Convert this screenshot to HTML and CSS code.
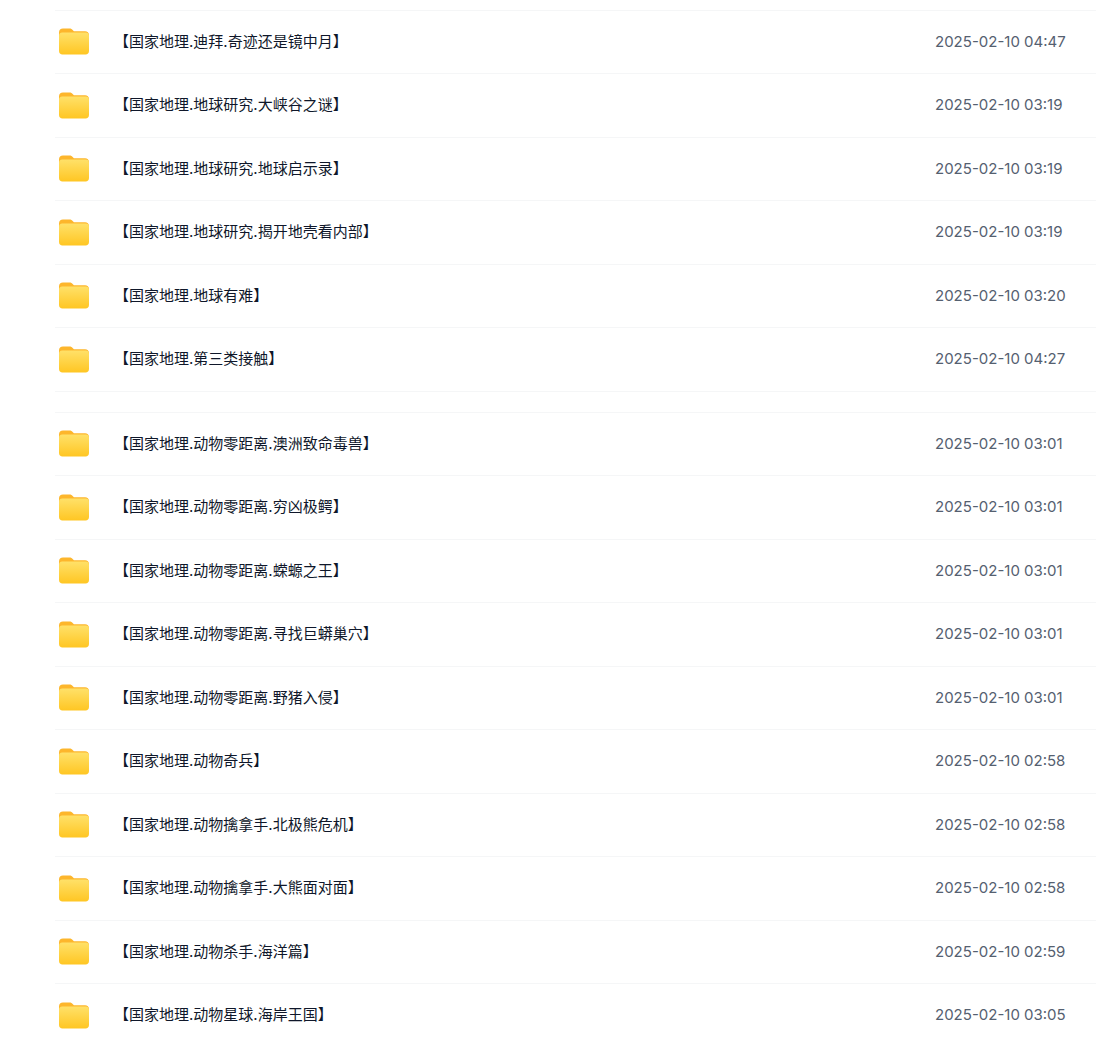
FILE: index.html
```html
<!DOCTYPE html>
<html lang="zh-CN">
<head>
  <meta charset="UTF-8">
  <title>文件列表</title>
  <link rel="stylesheet" href="styles.css">
</head>
<body>

<svg class="defs" width="0" height="0">
  <defs>
    <linearGradient id="folderFront" x1="0" y1="0" x2="0" y2="1">
      <stop offset="0" stop-color="#ffe169"/>
      <stop offset="1" stop-color="#ffc623"/>
    </linearGradient>
    <symbol id="folder" viewBox="0 0 32 28">
      <path d="M1 5.5C1 3 2.5 1.5 5 1.5h6.5c1.6 0 2.4.6 3.4 1.7l1 1.1H27c2.4 0 4 1.400 4 3.700V12H1z" fill="#fdb62c"/>
      <path d="M1 8.500C1 6.600 2.400 5.400 4.200 5.400H27.800C29.600 5.400 31 6.600 31 8.500V24c0 2-1.400 3.500-3.400 3.500H4.400C2.400 27.500 1 26 1 24z" fill="url(#folderFront)"/>
    </symbol>
  </defs>
</svg>

<div class="list">
  <div class="row">
    <svg class="icon"><use href="#folder"/></svg>
    <span class="name">【国家地理.迪拜.奇迹还是镜中月】</span>
    <span class="date">2025-02-10 04:47</span>
  </div>
  <div class="row">
    <svg class="icon"><use href="#folder"/></svg>
    <span class="name">【国家地理.地球研究.大峡谷之谜】</span>
    <span class="date">2025-02-10 03:19</span>
  </div>
  <div class="row">
    <svg class="icon"><use href="#folder"/></svg>
    <span class="name">【国家地理.地球研究.地球启示录】</span>
    <span class="date">2025-02-10 03:19</span>
  </div>
  <div class="row">
    <svg class="icon"><use href="#folder"/></svg>
    <span class="name">【国家地理.地球研究.揭开地壳看内部】</span>
    <span class="date">2025-02-10 03:19</span>
  </div>
  <div class="row">
    <svg class="icon"><use href="#folder"/></svg>
    <span class="name">【国家地理.地球有难】</span>
    <span class="date">2025-02-10 03:20</span>
  </div>
  <div class="row">
    <svg class="icon"><use href="#folder"/></svg>
    <span class="name">【国家地理.第三类接触】</span>
    <span class="date">2025-02-10 04:27</span>
  </div>
  <div class="row spacer"></div>
  <div class="row">
    <svg class="icon"><use href="#folder"/></svg>
    <span class="name">【国家地理.动物零距离.澳洲致命毒兽】</span>
    <span class="date">2025-02-10 03:01</span>
  </div>
  <div class="row">
    <svg class="icon"><use href="#folder"/></svg>
    <span class="name">【国家地理.动物零距离.穷凶极鳄】</span>
    <span class="date">2025-02-10 03:01</span>
  </div>
  <div class="row">
    <svg class="icon"><use href="#folder"/></svg>
    <span class="name">【国家地理.动物零距离.蝾螈之王】</span>
    <span class="date">2025-02-10 03:01</span>
  </div>
  <div class="row">
    <svg class="icon"><use href="#folder"/></svg>
    <span class="name">【国家地理.动物零距离.寻找巨蟒巢穴】</span>
    <span class="date">2025-02-10 03:01</span>
  </div>
  <div class="row">
    <svg class="icon"><use href="#folder"/></svg>
    <span class="name">【国家地理.动物零距离.野猪入侵】</span>
    <span class="date">2025-02-10 03:01</span>
  </div>
  <div class="row">
    <svg class="icon"><use href="#folder"/></svg>
    <span class="name">【国家地理.动物奇兵】</span>
    <span class="date">2025-02-10 02:58</span>
  </div>
  <div class="row">
    <svg class="icon"><use href="#folder"/></svg>
    <span class="name">【国家地理.动物擒拿手.北极熊危机】</span>
    <span class="date">2025-02-10 02:58</span>
  </div>
  <div class="row">
    <svg class="icon"><use href="#folder"/></svg>
    <span class="name">【国家地理.动物擒拿手.大熊面对面】</span>
    <span class="date">2025-02-10 02:58</span>
  </div>
  <div class="row">
    <svg class="icon"><use href="#folder"/></svg>
    <span class="name">【国家地理.动物杀手.海洋篇】</span>
    <span class="date">2025-02-10 02:59</span>
  </div>
  <div class="row">
    <svg class="icon"><use href="#folder"/></svg>
    <span class="name">【国家地理.动物星球.海岸王国】</span>
    <span class="date">2025-02-10 03:05</span>
  </div>
</div>

</body>
</html>
```

FILE: styles.css
```css
html, body { margin: 0; padding: 0; background: #fff; overflow: hidden; height: 1039px; }
body { font-family: Inter, "Noto Sans CJK SC", sans-serif; font-size: 15px; }
.defs { display: block; height: 0; }
.list { margin: 9.6px 0 0 55px; }
.row { display: flex; align-items: center; height: 63.5px; box-sizing: border-box; border-top: 1px solid #f5f6f7; }
.spacer { height: 21px; }
.icon { width: 32px; height: 28px; margin: -1px 0 0 3px; flex: none; }
.name { margin-left: 24px; color: #0f172a; flex: 1; line-height: 22px; }
.date { width: 161px; color: #556070; line-height: 22px; }
```
